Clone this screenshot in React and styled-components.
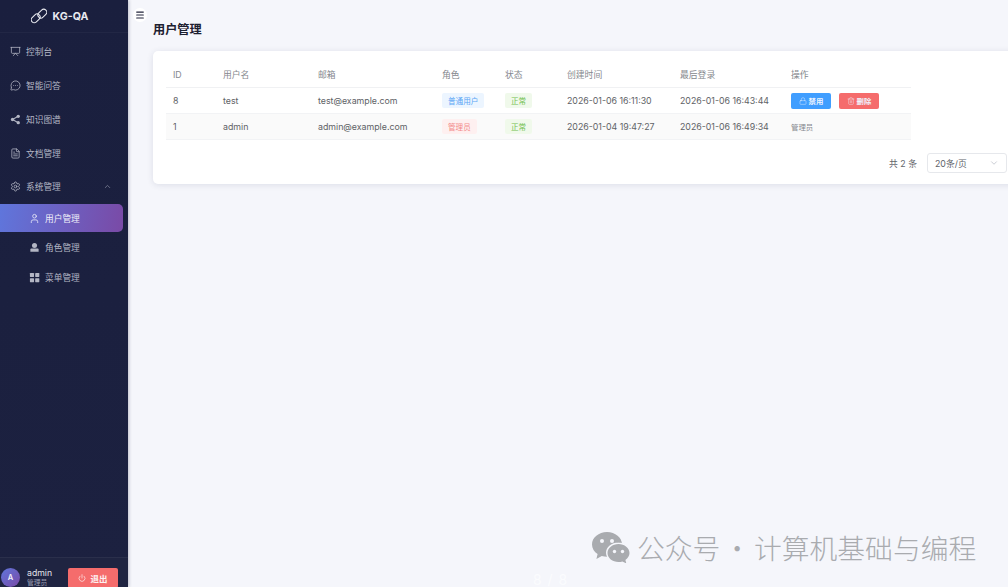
import React from 'react'
import styled, { createGlobalStyle } from 'styled-components'
import {
  ChevronDown,
  ChevronUp,
  FileText,
  Lock,
  Menu,
  MessageCircleMore,
  Power,
  Presentation,
  Settings,
  Trash2,
  User,
} from 'lucide-react'

const FONT = '"Inter", "Liberation Sans", "Noto Sans CJK SC", sans-serif'

const GlobalStyle = createGlobalStyle`
  html, body {
    margin: 0;
    height: 100%;
    overflow: hidden;
  }
  body {
    font-family: ${FONT};
    background: #f5f6fb;
  }
  #root {
    height: 100%;
  }
`

const Layout = styled.div`
  position: relative;
  display: flex;
  height: 587px;
  width: 1008px;
  overflow: hidden;
`

const Sidebar = styled.aside`
  width: 128px;
  flex-shrink: 0;
  display: flex;
  flex-direction: column;
  background: linear-gradient(180deg, #1a1f3e 0%, #1c2140 100%);
  box-shadow: 1px 0 3px rgba(30, 35, 70, 0.25);
`

const Brand = styled.div`
  height: 33px;
  display: flex;
  align-items: center;
  justify-content: center;
  gap: 6px;
  padding-right: 9px;
  box-sizing: border-box;
  border-bottom: 1px solid #222745;
  color: #e9eaf0;
  font-size: 10.6px;
  font-weight: 700;
`

const Nav = styled.nav`
  flex: 1;
  display: flex;
  flex-direction: column;
  padding-top: 1px;
`

const NavItem = styled.div`
  height: ${(p) => (p.$short ? '33px' : '34px')};
  display: flex;
  align-items: center;
  gap: 5px;
  padding-left: 10px;
  color: #b3b6c4;
  font-size: 8.7px;
  svg {
    flex-shrink: 0;
  }
`

const Caret = styled.span`
  margin-left: auto;
  margin-right: 16px;
  display: flex;
  color: #80849a;
`

const SubItem = styled.div`
  height: ${(p) => (p.$active ? '28px' : '29.5px')};
  margin: ${(p) => (p.$active ? '1px 5px 1px 0' : '0 5px 0 0')};
  display: flex;
  align-items: center;
  gap: 5px;
  padding-left: 29px;
  border-radius: 0 5px 5px 0;
  font-size: 8.7px;
  color: ${(p) => (p.$active ? '#f0effa' : '#b3b6c4')};
  background: ${(p) =>
    p.$active ? 'linear-gradient(100deg, #5f76dc 0%, #7a4aa6 100%)' : 'transparent'};
`

const UserBar = styled.div`
  height: 30px;
  box-sizing: border-box;
  display: flex;
  align-items: center;
  padding: 10px 10px 0 1px;
  background: #1f2441;
  border-top: 1px solid #2a2f4b;
`

const Avatar = styled.div`
  width: 19px;
  height: 19px;
  border-radius: 50%;
  flex-shrink: 0;
  display: flex;
  align-items: center;
  justify-content: center;
  margin-right: 7px;
  background: linear-gradient(135deg, #5f76dc, #7a4aa6);
  color: #f3f3fb;
  font-size: 7.5px;
  font-weight: 600;
`

const UserMeta = styled.div`
  display: flex;
  flex-direction: column;
  line-height: 9px;
`

const UserName = styled.span`
  color: #e4e5ec;
  font-size: 8.7px;
`

const UserRole = styled.span`
  color: #9a9db0;
  font-size: 6.8px;
`

const LogoutButton = styled.div`
  margin-left: auto;
  width: 50px;
  height: 20px;
  border-radius: 2px;
  display: flex;
  align-items: center;
  justify-content: center;
  gap: 4px;
  background: #f56c6c;
  color: #fdf1f1;
  font-size: 8.5px;
  font-weight: 600;
`

const Main = styled.main`
  flex: 1;
  min-width: 0;
  display: flex;
  flex-direction: column;
  padding: 8px 0 0 5px;
`

const MenuToggle = styled.div`
  width: 14px;
  height: 14px;
  border-radius: 50%;
  background: #fff;
  display: flex;
  align-items: center;
  justify-content: center;
  color: #20233a;
`

const Title = styled.h1`
  margin: 0 0 0 20px;
  font-size: 12.2px;
  line-height: 16px;
  font-weight: 700;
  color: #1d2030;
`

const Card = styled.section`
  margin: 13px 0 0 20px;
  width: 867px;
  height: 133px;
  flex-shrink: 0;
  box-sizing: border-box;
  padding: 11px 13px 0;
  background: #fff;
  border-radius: 5px;
  box-shadow: 0 1px 6px rgba(40, 50, 90, 0.12);
`

const Table = styled.table`
  width: 745px;
  table-layout: fixed;
  border-collapse: collapse;
  font-size: 8.8px;
  color: #606266;
`

const HeadCell = styled.th`
  height: 25px;
  padding: 0 0 0 7px;
  text-align: left;
  font-weight: 400;
  color: #85888e;
  border-bottom: 1px solid #f0f1f3;
`

const Row = styled.tr`
  background: ${(p) => (p.$striped ? '#fafafa' : '#fff')};
`

const Cell = styled.td`
  height: 25px;
  padding: 0 0 0 7px;
  border-bottom: 1px solid #f2f3f5;
  white-space: nowrap;
`

const Tag = styled.span`
  display: inline-flex;
  align-items: center;
  height: 15px;
  padding: 0 6px;
  border-radius: 2px;
  font-size: 7.6px;
  color: ${(p) => p.$color};
  background: ${(p) => p.$bg};
`

const ActionRow = styled.div`
  display: flex;
  gap: 8px;
`

const ActionButton = styled.div`
  width: 40px;
  height: 16px;
  border-radius: 2px;
  display: flex;
  align-items: center;
  justify-content: center;
  gap: 2px;
  font-size: 7.4px;
  font-weight: 600;
  color: #eef5ff;
  background: ${(p) => p.$bg};
`

const MutedNote = styled.span`
  color: #85888e;
  font-size: 7.4px;
`

const Pagination = styled.div`
  display: flex;
  align-items: center;
  justify-content: flex-end;
  gap: 10px;
  margin: 13px 0 0;
  width: 841px;
  font-size: 8.8px;
  color: #63666c;
`

const PageSelect = styled.div`
  width: 80px;
  height: 20px;
  box-sizing: border-box;
  padding: 0 7px;
  display: flex;
  align-items: center;
  justify-content: space-between;
  border: 1px solid #e6e8ec;
  border-radius: 3px;
  color: #60636a;
`

const SelectCaret = styled.span`
  display: flex;
  color: #c0c4cc;
`

const Watermark = styled.div`
  position: absolute;
  left: 592px;
  top: 530px;
  display: flex;
  align-items: center;
  gap: 6px;
  color: #a9abaf;
  font-size: 27.8px;
  line-height: 34px;
  font-family: "Noto Sans CJK SC", sans-serif;
  font-weight: 300;
`

const WatermarkText = styled.span`
  display: flex;
`

const WatermarkDot = styled.span`
  width: 33.5px;
  text-align: center;
`

const PageCount = styled.div`
  position: absolute;
  left: 533px;
  top: 571px;
  color: #fbfcfe;
  font-size: 14px;
  letter-spacing: 1px;
`

const LogoIcon = () => (
  <svg width="16" height="16" viewBox="0 0 24 24" fill="none" stroke="currentColor" strokeWidth="1.6">
    <rect x="-0.500" y="11" width="15" height="9" rx="4.500" transform="rotate(-45 7 15.500)" />
    <rect x="9.500" y="4" width="15" height="9" rx="4.500" transform="rotate(-45 17 8.500)" />
  </svg>
)

const ShareIcon = () => (
  <svg width="11" height="11" viewBox="0 0 24 24" fill="currentColor">
    <circle cx="18" cy="5" r="3.6" />
    <circle cx="5.500" cy="12" r="3.6" />
    <circle cx="18" cy="19" r="3.6" />
    <path d="M5.500 12 18 5M5.500 12 18 19" stroke="currentColor" strokeWidth="2.2" />
  </svg>
)

const RoleIcon = () => (
  <svg width="11" height="11" viewBox="0 0 24 24" fill="currentColor">
    <circle cx="12" cy="7.5" r="5.5" />
    <path d="M3 16.500c0-1.400 1-2.500 2.500-2.500h13c1.500 0 2.500 1.100 2.500 2.500V21H3z" />
  </svg>
)

const GridIcon = () => (
  <svg width="11" height="11" viewBox="0 0 24 24" fill="currentColor">
    <rect x="2" y="2" width="9" height="9" rx="1" />
    <rect x="13.500" y="2" width="9" height="9" rx="1" />
    <rect x="2" y="13.500" width="9" height="9" rx="1" />
    <rect x="13.500" y="13.500" width="9" height="9" rx="1" />
  </svg>
)

const WechatIcon = () => (
  <svg width="39" height="31" viewBox="0 0 39 31">
    <path d="M15 0C6.700 0 0 5.600 0 12.400c0 3.900 2.200 7.400 5.600 9.600L4.400 27l5.400-3c1.600.5 3.400.8 5.200.8 8.300 0 15-5.600 15-12.400S23.300 0 15 0z" fill="#a9abaf" />
    <path d="M26.500 10.500c-6.900 0-12.500 4.600-12.500 10.200s5.600 10.200 12.500 10.200c1.400 0 2.800-.2 4-.6l4.400 2.200-1-4c2.900-1.900 4.600-4.700 4.600-7.800 0-5.600-5.600-10.200-12.500-10.200z" fill="#f5f6fb" />
    <path d="M26.500 12c-6 0-11 4-11 9s5 9 11 9c1.400 0 2.700-.2 3.900-.6l3.900 2-.9-3.500c2.500-1.700 4.100-4.200 4.100-6.900 0-5-5-9-11-9z" fill="#a9abaf" />
    <circle cx="10" cy="9" r="2" fill="#f5f6fb" />
    <circle cx="20" cy="9" r="2" fill="#f5f6fb" />
    <circle cx="22.500" cy="19.500" r="1.700" fill="#f5f6fb" />
    <circle cx="30.500" cy="19.500" r="1.700" fill="#f5f6fb" />
  </svg>
)

const columns = [50, 95, 124, 63, 62, 113, 111, 127]
const heads = ['ID', '用户名', '邮箱', '角色', '状态', '创建时间', '最后登录', '操作']

const users = [
  {
    id: 8,
    name: 'test',
    email: 'test@example.com',
    role: '普通用户',
    roleColor: '#5ba6f5',
    roleBg: '#ecf5ff',
    created: '2026-01-06 16:11:30',
    login: '2026-01-06 16:43:44',
  },
  {
    id: 1,
    name: 'admin',
    email: 'admin@example.com',
    role: '管理员',
    roleColor: '#f38a8a',
    roleBg: '#fef0f0',
    created: '2026-01-04 19:47:27',
    login: '2026-01-06 16:49:34',
    isAdmin: true,
  },
]

const App = () => {
  return (
    <Layout>
      <GlobalStyle />
      <Sidebar>
        <Brand>
          <LogoIcon />
          KG-QA
        </Brand>
        <Nav>
          <NavItem>
            <Presentation size={11} strokeWidth={1.7} />
            控制台
          </NavItem>
          <NavItem>
            <MessageCircleMore size={11} strokeWidth={1.7} />
            智能问答
          </NavItem>
          <NavItem>
            <ShareIcon />
            知识图谱
          </NavItem>
          <NavItem>
            <FileText size={11} strokeWidth={1.7} />
            文档管理
          </NavItem>
          <NavItem $short>
            <Settings size={11} strokeWidth={1.7} />
            系统管理
            <Caret>
              <ChevronUp size={9} />
            </Caret>
          </NavItem>
          <SubItem $active>
            <User size={11} strokeWidth={1.7} />
            用户管理
          </SubItem>
          <SubItem>
            <RoleIcon />
            角色管理
          </SubItem>
          <SubItem>
            <GridIcon />
            菜单管理
          </SubItem>
        </Nav>
        <UserBar>
          <Avatar>A</Avatar>
          <UserMeta>
            <UserName>admin</UserName>
            <UserRole>管理员</UserRole>
          </UserMeta>
          <LogoutButton>
            <Power size={8} />
            退出
          </LogoutButton>
        </UserBar>
      </Sidebar>
      <Main>
        <MenuToggle>
          <Menu size={10} strokeWidth={2.6} />
        </MenuToggle>
        <Title>用户管理</Title>
        <Card>
          <Table>
            <colgroup>
              {columns.map((w, i) => (
                <col key={i} style={{ width: w }} />
              ))}
            </colgroup>
            <thead>
              <tr>
                {heads.map((h) => (
                  <HeadCell key={h}>{h}</HeadCell>
                ))}
              </tr>
            </thead>
            <tbody>
              {users.map((u, i) => (
                <Row key={u.id} $striped={i % 2 === 1}>
                  <Cell>{u.id}</Cell>
                  <Cell>{u.name}</Cell>
                  <Cell>{u.email}</Cell>
                  <Cell>
                    <Tag $color={u.roleColor} $bg={u.roleBg}>
                      {u.role}
                    </Tag>
                  </Cell>
                  <Cell>
                    <Tag $color="#72c050" $bg="#f0f9eb">
                      正常
                    </Tag>
                  </Cell>
                  <Cell>{u.created}</Cell>
                  <Cell>{u.login}</Cell>
                  <Cell>
                    {u.isAdmin ? (
                      <MutedNote>管理员</MutedNote>
                    ) : (
                      <ActionRow>
                        <ActionButton $bg="#409eff">
                          <Lock size={8} strokeWidth={1.3} />
                          禁用
                        </ActionButton>
                        <ActionButton $bg="#f56c6c">
                          <Trash2 size={8} strokeWidth={1.3} />
                          删除
                        </ActionButton>
                      </ActionRow>
                    )}
                  </Cell>
                </Row>
              ))}
            </tbody>
          </Table>
          <Pagination>
            <span>共 2 条</span>
            <PageSelect>
              20条/页
              <SelectCaret>
                <ChevronDown size={10} />
              </SelectCaret>
            </PageSelect>
          </Pagination>
        </Card>
      </Main>
      <Watermark>
        <WechatIcon />
        <WatermarkText>
          公众号<WatermarkDot>·</WatermarkDot>计算机基础与编程
        </WatermarkText>
      </Watermark>
      <PageCount>8 / 8</PageCount>
    </Layout>
  )
}

export default App
